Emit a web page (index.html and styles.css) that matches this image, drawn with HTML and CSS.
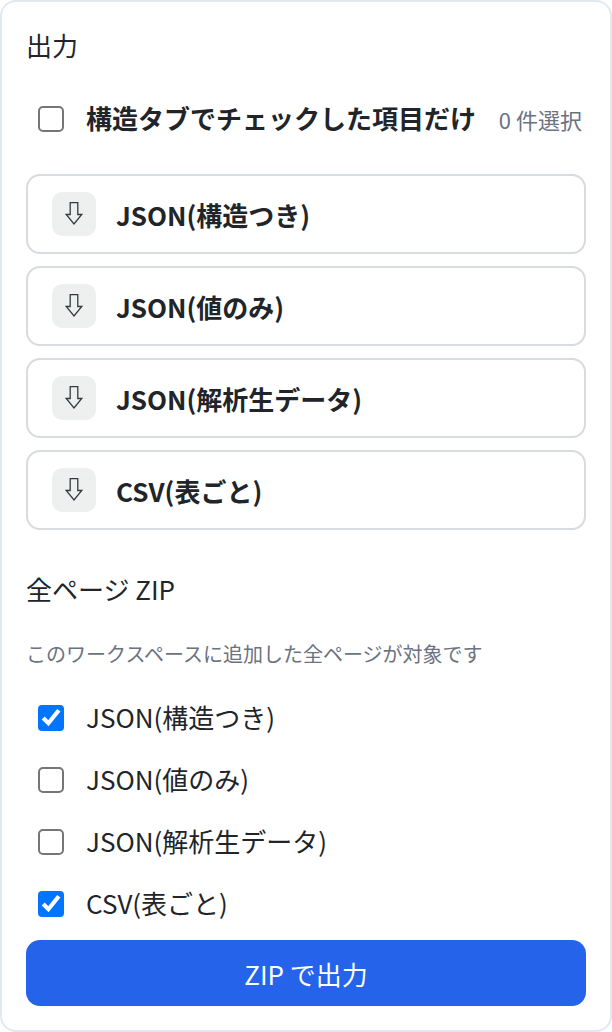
FILE: index.html
```html
<!DOCTYPE html>
<html lang="ja">
<head>
  <meta charset="UTF-8">
  <meta name="viewport" content="width=device-width, initial-scale=1.0">
  <title>出力</title>
  <link rel="stylesheet" href="styles.css">
</head>
<body>
  <main class="panel">
    <h2 class="title">出力</h2>
    <div class="check-row check-row-top">
      <label class="check check-strong">
        <input type="checkbox">
        <span>構造タブでチェックした項目だけ</span>
      </label>
      <span class="count">0 件選択</span>
    </div>

    <div class="exports">
      <button class="export">
        <span class="export-icon">
          <svg viewBox="0 0 18 24" width="18" height="24"><path d="M5.200 .5H12.800V12.500H16.800L9 22 1.200 12.500H5.200Z"/></svg>
        </span>
        JSON(構造つき)
      </button>
      <button class="export">
        <span class="export-icon">
          <svg viewBox="0 0 18 24" width="18" height="24"><path d="M5.200 .5H12.800V12.500H16.800L9 22 1.200 12.500H5.200Z"/></svg>
        </span>
        JSON(値のみ)
      </button>
      <button class="export">
        <span class="export-icon">
          <svg viewBox="0 0 18 24" width="18" height="24"><path d="M5.200 .5H12.800V12.500H16.800L9 22 1.200 12.500H5.200Z"/></svg>
        </span>
        JSON(解析生データ)
      </button>
      <button class="export">
        <span class="export-icon">
          <svg viewBox="0 0 18 24" width="18" height="24"><path d="M5.200 .5H12.800V12.500H16.800L9 22 1.200 12.500H5.200Z"/></svg>
        </span>
        CSV(表ごと)
      </button>
    </div>

    <h2 class="title title-zip">全ページ ZIP</h2>
    <p class="note">このワークスペースに追加した全ページが対象です</p>

    <div class="zip-options">
      <label class="check check-row"><input type="checkbox" checked><span>JSON(構造つき)</span></label>
      <label class="check check-row"><input type="checkbox"><span>JSON(値のみ)</span></label>
      <label class="check check-row"><input type="checkbox"><span>JSON(解析生データ)</span></label>
      <label class="check check-row"><input type="checkbox" checked><span>CSV(表ごと)</span></label>
    </div>

    <button class="zip-button">ZIP で出力</button>
  </main>
</body>
</html>
```

FILE: styles.css
```css
* {
  box-sizing: border-box;
}
body {
  margin: 0;
  background: #fff;
  color: #212529;
  font-family: "Noto Sans CJK JP", "Noto Sans", sans-serif;
}
button {
  font: inherit;
  cursor: pointer;
}
.panel {
  height: 1032px;
  padding: 25px 24px 0;
  border: 2px solid #e2e8f0;
  border-radius: 16px;
  background: #fff;
}
.title {
  margin: 0;
  font-size: 26px;
  font-weight: 400;
  line-height: 36px;
}
.title-zip {
  margin-top: 41px;
}
.note {
  margin: 33px 0 19px;
  font-size: 20px;
  line-height: 28px;
  color: #6b7280;
}
.check-row {
  display: flex;
  align-items: center;
  height: 62px;
  padding-left: 12px;
}
.check-row-top {
  justify-content: space-between;
  margin-top: 25px;
  padding-right: 4px;
}
.check {
  display: flex;
  align-items: center;
  gap: 22px;
  font-size: 26px;
}
.check span {
  line-height: 30px;
  margin-top: -3px;
}
.check input {
  width: 13px;
  height: 13px;
  margin: 0;
  zoom: 2;
}
.check-strong {
  font-weight: 700;
}
.count {
  font-size: 22px;
  color: #6b7280;
}
.exports {
  display: flex;
  flex-direction: column;
  gap: 12px;
  margin-top: 24px;
}
.export {
  display: flex;
  align-items: center;
  gap: 20px;
  height: 80px;
  padding: 0 24px;
  border: 2px solid #d8dbdf;
  border-radius: 14px;
  background: #fff;
  color: #212529;
  font-size: 26px;
  font-weight: 700;
  text-align: left;
}
.export-icon {
  display: flex;
  align-items: center;
  justify-content: center;
  width: 44px;
  height: 44px;
  border-radius: 10px;
  background: #eef0f0;
}
.export-icon svg {
  fill: none;
  stroke: #343a40;
  stroke-width: 1.300;
}
.zip-button {
  display: block;
  width: 100%;
  height: 66px;
  margin-top: 5px;
  border: 0;
  border-radius: 14px;
  background: #2563eb;
  color: #fff;
  font-size: 26px;
}
```
